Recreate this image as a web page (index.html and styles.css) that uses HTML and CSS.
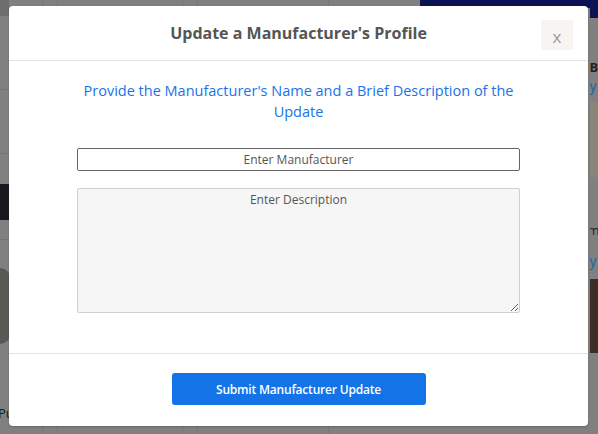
FILE: index.html
```html
<!DOCTYPE html>
<html>
<head>
<meta charset="utf-8">
<link rel="stylesheet" href="styles.css">
</head>
<body>
<div class="page">
  <div class="side left">
    <div class="l-top"></div>
    <div class="l-row r1"></div>
    <div class="l-row r2"></div>
    <div class="l-dark"></div>
    <div class="l-row r3"></div>
    <div class="l-circle"></div>
    <div class="l-text">Pu</div>
  </div>
  <div class="center">
    <div class="c-top">
      <span class="vl v1"></span><span class="vl v2"></span><span class="vl v3"></span><span class="vl v4"></span><span class="vl v5"></span>
      <span class="navy"></span>
    </div>
    <div class="c-mid"></div>
    <div class="c-bot">
      <span class="vl v1"></span><span class="vl v2"></span><span class="vl v3"></span><span class="vl v4"></span><span class="vl v5"></span>
    </div>
  </div>
  <div class="side right">
    <div class="r-navy"></div>
    <div class="r-by">By</div>
    <div class="r-link">y</div>
    <div class="r-img1"></div>
    <div class="r-m">m</div>
    <div class="r-link2">y</div>
    <div class="r-img2"></div>
  </div>
</div>

<div class="modal">
  <div class="modal-header">
    <h2 class="modal-title">Update a Manufacturer's Profile</h2>
    <button class="close-btn">x</button>
  </div>
  <div class="modal-body">
    <p class="intro">Provide the Manufacturer's Name and a Brief Description of the Update</p>
    <input class="field" type="text" placeholder="Enter Manufacturer">
    <textarea class="area" placeholder="Enter Description"></textarea>
  </div>
  <div class="modal-footer">
    <button class="submit">Submit Manufacturer Update</button>
  </div>
</div>
</body>
</html>
```

FILE: styles.css
```css
* { box-sizing: border-box; }
html, body { margin: 0; padding: 0; }
body {
  width: 598px;
  height: 434px;
  overflow: hidden;
  background: #808080;
  font-family: "Open Sans", "Noto Sans", sans-serif;
  position: relative;
}
.page {
  display: flex;
  height: 434px;
}
.side { display: flex; flex-direction: column; overflow: hidden; }
.left { width: 10px; }
.l-top { height: 16px; background: #6e6e6e; }
.l-row { height: 1px; background: #747474; }
.r1 { margin-top: 73px; }
.r2 { margin-top: 63px; }
.l-dark { margin-top: 30px; height: 36px; background: #17191f; }
.r3 { margin-top: 19px; }
.l-circle { margin-top: 28px; height: 76px; width: 10px; background: #5a5855; border-radius: 0 40px 40px 0; }
.l-text { margin-top: 62px; font-size: 13px; color: #1c1c1c; line-height: 14px; margin-left: -2px; }

.center { flex: 1; display: flex; flex-direction: column; }
.c-top { height: 8px; position: relative; display: flex; }
.c-mid { flex: 1; }
.c-bot { height: 10px; position: relative; display: flex; }
.vl { display: block; width: 1px; height: 100%; background: #767676; }
.v1 { margin-left: 33px; }
.v2 { margin-left: 14px; }
.v3 { margin-left: 124px; }
.v4 { margin-left: 14px; }
.v5 { margin-left: 130px; }
.navy { display: block; margin-left: 91px; width: 170px; height: 100%; background: #0b1352; }

.right { width: 10px; }
.r-navy { height: 18px; background: #0b1352; flex-shrink: 0; }
.r-by { margin-top: 42px; font-size: 13px; font-weight: 700; color: #222; line-height: 15px; height: 15px; flex-shrink: 0; }
.r-link { margin-top: 2px; font-size: 14px; color: #1766a3; line-height: 17px; height: 17px; flex-shrink: 0; }
.r-img1 { margin-top: 8px; height: 75px; background: #8a847a; flex-shrink: 0; }
.r-m { margin-top: 46px; font-size: 13px; color: #222; line-height: 15px; margin-left: -2px; flex-shrink: 0; }
.r-link2 { margin-top: 14px; font-size: 14px; color: #1766a3; line-height: 18px; flex-shrink: 0; }
.r-img2 { margin-top: 9px; height: 74px; background: #3c2e27; flex-shrink: 0; }

.modal {
  position: absolute;
  left: 9px;
  top: 6px;
  width: 579px;
  height: 420px;
  background: #fff;
  border-radius: 4px;
  box-shadow: 0 1px 2px rgba(0,0,0,0.2);
  display: flex;
  flex-direction: column;
}
.modal-header {
  height: 55px;
  border-bottom: 1px solid #e3e3e3;
  display: flex;
  align-items: center;
  justify-content: center;
  position: relative;
}
.modal-title {
  margin: 0;
  font-size: 16px;
  font-weight: 700;
  color: #555;
  line-height: 22px;
}
.close-btn {
  position: absolute;
  right: 15px;
  top: 14px;
  width: 32px;
  height: 30px;
  border: none;
  border-radius: 3px;
  background: #f7f4f2;
  color: #999;
  font-family: "Open Sans", sans-serif;
  font-size: 17px;
  line-height: 30px;
  padding: 0;
  padding-top: 2px;
}
.modal-body {
  flex: 1;
  border-bottom: 1px solid #e3e3e3;
  padding: 19px 68px 0;
  display: flex;
  flex-direction: column;
}
.intro {
  margin: 0 0 26px;
  text-align: center;
  color: #1a73e8;
  font-size: 14.5px;
  line-height: 21px;
}
.field {
  width: 100%;
  height: 23px;
  border: 1px solid #666;
  border-radius: 2px;
  text-align: center;
  font-family: "Open Sans", sans-serif;
  font-size: 12px;
  color: #555;
  padding: 0;
  margin: 0 0 17px;
}
.field::placeholder { color: #555; }
.area {
  width: 100%;
  height: 125px;
  background: #f6f6f6;
  border: 1px solid #cfcfcf;
  border-radius: 2px;
  text-align: center;
  font-family: "Open Sans", sans-serif;
  font-size: 12px;
  line-height: 16px;
  padding: 3px 4px;
  margin: 0;
  resize: vertical;
}
.area::placeholder { color: #555; }
.modal-footer {
  height: 72px;
  display: flex;
  align-items: center;
  justify-content: center;
  padding-bottom: 2px;
}
.submit {
  width: 254px;
  height: 32px;
  background: #1473e6;
  color: #fff;
  border: none;
  border-radius: 3px;
  font-family: "Open Sans", sans-serif;
  font-size: 12px;
  font-weight: 600;
  letter-spacing: -0.2px;
  margin-top: 0;
}
```
